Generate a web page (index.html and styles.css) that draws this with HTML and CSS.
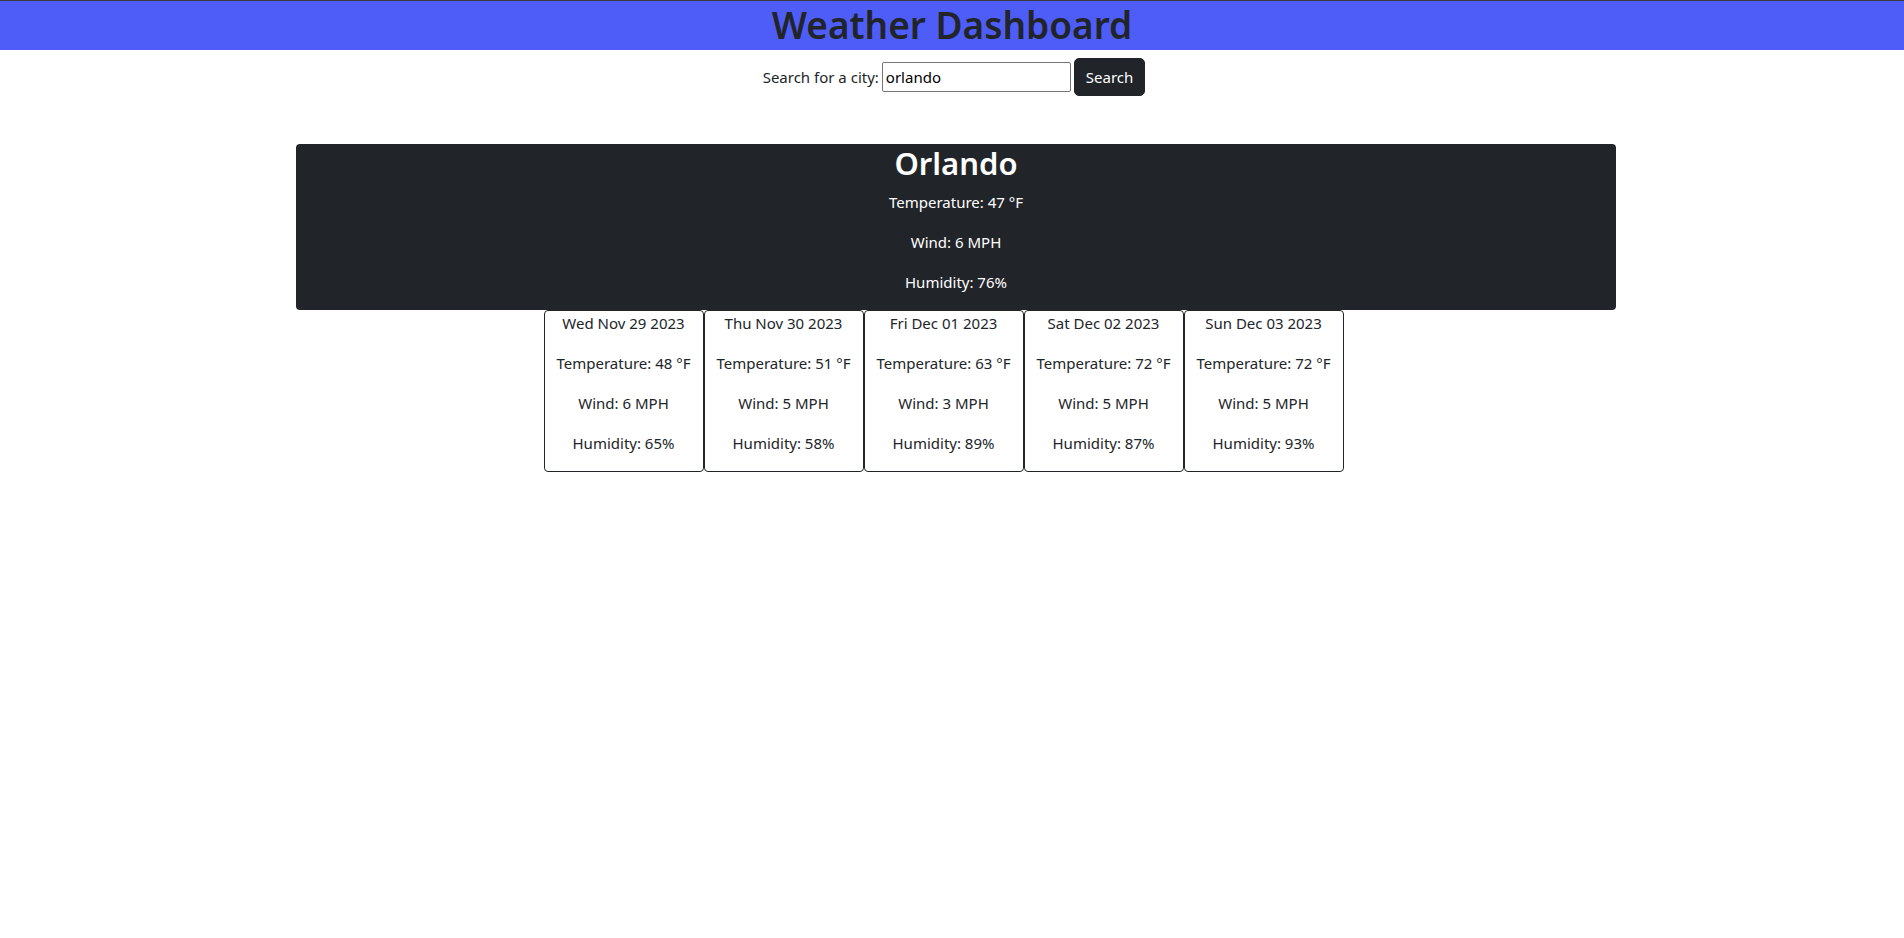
FILE: index.html
```html
<!DOCTYPE html>
<html lang="en">
<head>
<meta charset="utf-8">
<title>Weather Dashboard</title>
<link rel="stylesheet" href="styles.css">
</head>
<body>
<header class="site-header">
  <h1 class="title">Weather Dashboard</h1>
</header>
<form class="search">
  <label class="search-label" for="city">Search for a city:</label>
  <input class="search-input" id="city" type="text" value="orlando">
  <button class="search-btn" type="button">Search</button>
</form>
<main class="page">
  <section class="current">
    <h2 class="city">Orlando</h2>
    <p>Temperature: 47 °F</p>
    <p>Wind: 6 MPH</p>
    <p>Humidity: 76%</p>
  </section>
  <section class="forecast">
    <div class="day">
      <p>Wed Nov 29 2023</p>
      <p>Temperature: 48 °F</p>
      <p>Wind: 6 MPH</p>
      <p>Humidity: 65%</p>
    </div>
    <div class="day">
      <p>Thu Nov 30 2023</p>
      <p>Temperature: 51 °F</p>
      <p>Wind: 5 MPH</p>
      <p>Humidity: 58%</p>
    </div>
    <div class="day">
      <p>Fri Dec 01 2023</p>
      <p>Temperature: 63 °F</p>
      <p>Wind: 3 MPH</p>
      <p>Humidity: 89%</p>
    </div>
    <div class="day">
      <p>Sat Dec 02 2023</p>
      <p>Temperature: 72 °F</p>
      <p>Wind: 5 MPH</p>
      <p>Humidity: 87%</p>
    </div>
    <div class="day">
      <p>Sun Dec 03 2023</p>
      <p>Temperature: 72 °F</p>
      <p>Wind: 5 MPH</p>
      <p>Humidity: 93%</p>
    </div>
  </section>
</main>
</body>
</html>
```

FILE: styles.css
```css
* { box-sizing: border-box; }

body {
  margin: 0;
  font-family: "Segoe UI", "Noto Sans", "Open Sans", sans-serif;
  font-size: 15px;
  line-height: 24px;
  color: #212529;
  background: #ffffff;
  border-top: 1px solid #3c3c3c;
}

.site-header {
  background: #4f5df8;
  height: 49px;
  text-align: center;
}

.title {
  margin: 0;
  font-size: 37px;
  font-weight: 600;
  line-height: 48px;
  color: #212529;
}

.search {
  display: flex;
  justify-content: center;
  align-items: center;
  gap: 3px;
  padding-left: 4px;
  margin-top: 8px;
  height: 38px;
}

.search-label {
  font-size: 15px;
}

.search-input {
  width: 189px;
  height: 30px;
  border: 1px solid #767676;
  border-radius: 2px;
  padding: 1px 3px;
  font: inherit;
  font-size: 15px;
  color: #000;
}

.search-btn {
  height: 38px;
  padding: 6px 11px;
  border: 1px solid #212529;
  border-radius: 5px;
  background: #212529;
  color: #ffffff;
  font: inherit;
  font-size: 15px;
}

.page {
  padding-top: 48px;
}

.current {
  display: flow-root;
  width: 1320px;
  margin-left: 296px;
  background: #212529;
  color: #ffffff;
  border-radius: 4px;
  text-align: center;
}

.city {
  margin: 0 0 8px;
  font-size: 31px;
  font-weight: 600;
  line-height: 38px;
}

.current p,
.day p {
  margin: 0 0 16px;
}

.forecast {
  display: flex;
  justify-content: center;
  padding-right: 17px;
}

.day {
  width: 160px;
  border: 1px solid #212529;
  border-radius: 4px;
  text-align: center;
}
```
